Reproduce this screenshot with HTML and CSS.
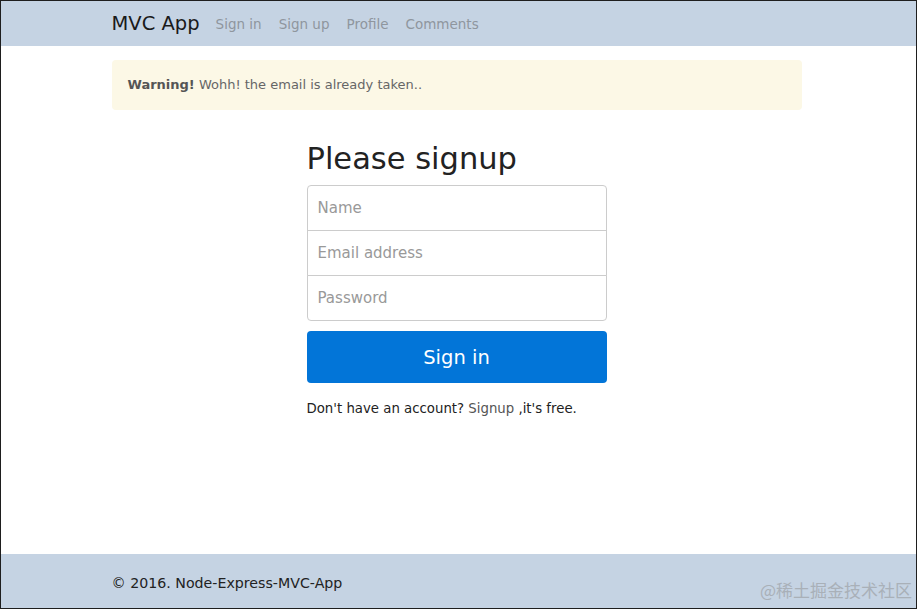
FILE: index.html
```html
<!DOCTYPE html>
<html lang="en">
<head>
    <meta charset="UTF-8">
    <meta name="viewport" content="width=device-width, initial-scale=1.0">
    <title>Signup - MVC App</title>
    <link rel="stylesheet" href="styles.css">
</head>
<body>
    <div class="page">
        <!-- Navbar -->
        <nav class="navbar">
            <div class="container nav-inner">
                <a class="brand" href="#">MVC App</a>
                <ul class="nav-links">
                    <li><a href="#">Sign in</a></li>
                    <li><a href="#">Sign up</a></li>
                    <li><a href="#">Profile</a></li>
                    <li><a href="#">Comments</a></li>
                </ul>
            </div>
        </nav>

        <main class="container main">
            <div class="alert"><strong>Warning!</strong> Wohh! the email is already taken..</div>

            <form class="form-signup">
                <h2>Please signup</h2>
                <div class="input-group">
                    <input type="text" class="first" placeholder="Name">
                    <input type="email" placeholder="Email address">
                    <input type="password" class="last" placeholder="Password">
                </div>
                <button type="submit" class="btn-primary">Sign in</button>
                <p class="signup-note">Don't have an account? <a href="#">Signup</a> ,it's free.</p>
            </form>
        </main>

        <!-- Footer -->
        <footer class="footer">
            <div class="container">
                <span>&copy; 2016. Node-Express-MVC-App</span>
            </div>
            <span class="watermark">@稀土掘金技术社区</span>
        </footer>
    </div>
</body>
</html>
```

FILE: styles.css
```css
* {
    margin: 0;
    padding: 0;
    box-sizing: border-box;
}

html, body {
    height: 100%;
}

body {
    font-family: "DejaVu Sans", Verdana, sans-serif;
    background-color: #fff;
    color: #222;
}

.page {
    height: 100%;
    border: 1px solid #1e1e1e;
    display: flex;
    flex-direction: column;
}

.container {
    width: 694px;
    padding-right: 4px; /* nudges content 2px left like the shot */
    margin: 0 auto;
}

/* Navbar */
.navbar {
    background-color: #c5d3e3;
    height: 45px;
}

.nav-inner {
    display: flex;
    align-items: center;
    height: 100%;
}

.brand {
    color: #1a1a1a;
    font-size: 19.5px;
    text-decoration: none;
    margin-right: 16px;
}

.nav-links {
    list-style: none;
    display: flex;
    gap: 17px;
}

.nav-links a {
    color: #8f969e;
    font-size: 13.5px;
    text-decoration: none;
}

/* Main */
.main {
    flex: 1;
    padding-top: 14px;
}

.alert {
    background-color: #fcf8e6;
    color: #666;
    font-size: 13px;
    padding: 17px 16px 0;
    border-radius: 4px;
    height: 50px;
}

.alert strong {
    color: #555;
}

.form-signup {
    width: 300px;
    margin: 31px auto 0;
}

.form-signup h2 {
    font-weight: normal;
    font-size: 30.5px;
    color: #222;
    margin-bottom: 8px;
    line-height: 36px;
}

.input-group input {
    display: block;
    width: 100%;
    height: 46px;
    border: 1px solid #ccc;
    font-family: inherit;
    font-size: 15px;
    padding: 0 10px;
    margin-top: -1px;
    color: #333;
}

.input-group input::placeholder {
    color: #999;
}

.input-group .first {
    margin-top: 0;
    border-radius: 4px 4px 0 0;
}

.input-group .last {
    border-radius: 0 0 4px 4px;
}

.btn-primary {
    display: block;
    width: 100%;
    height: 52px;
    margin-top: 10px;
    background-color: #0275d8;
    color: #fff;
    border: none;
    border-radius: 4px;
    font-family: inherit;
    font-size: 19.5px;
    cursor: pointer;
}

.signup-note {
    margin-top: 18px;
    font-size: 13.3px;
    color: #222;
}

.signup-note a {
    color: #555;
    text-decoration: none;
}

/* Footer */
.footer {
    background-color: #c5d3e3;
    height: 54px;
    display: flex;
    align-items: center;
    position: relative;
    font-size: 14.2px;
    color: #222;
}

.footer .container {
    padding-top: 4px;
}

.watermark {
    position: absolute;
    right: 4px;
    bottom: 6px;
    font-family: "Noto Sans CJK SC", sans-serif;
    font-size: 17px;
    color: #a9b0b8;
}
```
